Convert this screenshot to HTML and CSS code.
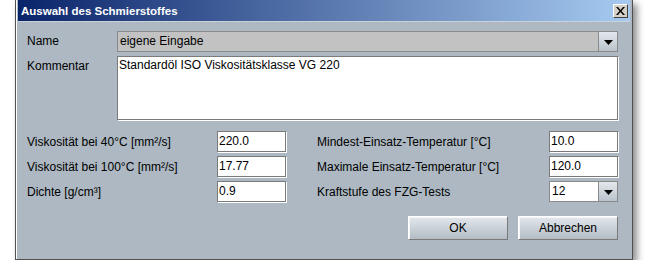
FILE: index.html
```html
<!DOCTYPE html>
<html lang="de">
<head>
<meta charset="utf-8">
<title>Auswahl des Schmierstoffes</title>
<link rel="stylesheet" href="styles.css">
</head>
<body>
<div class="window">
  <div class="titlebar">
    <span class="title">Auswahl des Schmierstoffes</span>
    <span class="close"><svg width="9" height="8" viewBox="0 0 9 8"><path d="M0 0h2l2.5 3 2.5-3h2L5.5 4 9 8H7L4.5 5 2 8H0l3.5-4z" fill="#000"/></svg></span>
  </div>
  <div class="content">
    <div class="top">
      <span class="label">Name</span>
      <div class="combo wide">
        <span class="combo-text">eigene Eingabe</span>
        <span class="arrow"><svg width="9" height="5" viewBox="0 0 9 5"><path d="M0 0h9L4.5 5z" fill="#000"/></svg></span>
      </div>
      <span class="label">Kommentar</span>
      <div class="textarea">Standardöl ISO Viskositätsklasse VG 220</div>
    </div>
    <div class="params">
      <div class="col">
        <div class="row"><span class="label">Viskosität bei 40°C [mm²/s]</span><span class="field">220.0</span></div>
        <div class="row"><span class="label">Viskosität bei 100°C [mm²/s]</span><span class="field">17.77</span></div>
        <div class="row"><span class="label">Dichte [g/cm³]</span><span class="field">0.9</span></div>
      </div>
      <div class="col">
        <div class="row"><span class="label">Mindest-Einsatz-Temperatur [°C]</span><span class="field">10.0</span></div>
        <div class="row"><span class="label">Maximale Einsatz-Temperatur [°C]</span><span class="field">120.0</span></div>
        <div class="row"><span class="label">Kraftstufe des FZG-Tests</span>
          <div class="combo small">
            <span class="combo-text">12</span>
            <span class="arrow"><svg width="9" height="5" viewBox="0 0 9 5"><path d="M0 0h9L4.5 5z" fill="#000"/></svg></span>
          </div>
        </div>
      </div>
    </div>
    <div class="buttons">
      <button class="btn">OK</button>
      <button class="btn">Abbrechen</button>
    </div>
  </div>
</div>
</body>
</html>
```
FILE: styles.css
```css
* { box-sizing: border-box; }
html, body { margin: 0; padding: 0; background: #ffffff; }
body {
  font-family: "Liberation Sans", Arial, sans-serif;
  font-size: 12px;
  color: #000;
}
.window {
  margin-left: 15px;
  width: 618px;
  height: 260px;
  background: #adb8c2;
  border: 1px solid #505050;
  border-top: none;
  box-shadow: inset 1px 0 0 #ffffff, 4px 4px 7px rgba(0,0,0,0.45);
  display: flex;
  flex-direction: column;
}
.titlebar {
  height: 22px;
  margin-left: 2px;
  margin-right: 2px;
  background: linear-gradient(to right, #0a246a, #a6caf0);
  display: flex;
  align-items: center;
  justify-content: space-between;
  padding: 0 2px 0 3px;
  border-bottom: 1px solid #c9d2da;
}
.title {
  color: #fff;
  font-weight: bold;
  font-size: 11.5px;
}
.close {
  width: 15px;
  height: 14px;
  background: #d4d0c8;
  border: 1px solid;
  border-color: #fff #404040 #404040 #fff;
  display: flex;
  align-items: center;
  justify-content: center;
}
.content {
  flex: 1;
  padding: 9px 14px 0 11px;
  display: flex;
  flex-direction: column;
}
.top {
  display: grid;
  grid-template-columns: 90px 1fr;
  row-gap: 4px;
  align-items: start;
}
.top .label { line-height: 21px; }
.combo {
  height: 21px;
  display: flex;
  border: 1px solid #8a8a8a;
  background: #c2c2c2;
}
.combo.small { background: #fff; width: 69px; }
.combo-text {
  flex: 1;
  padding-left: 2px;
  line-height: 19px;
}
.arrow {
  width: 19px;
  border-left: 1px solid #8a8a8a;
  background: linear-gradient(#e3e8ed, #b9c2cb);
  display: flex;
  align-items: center;
  justify-content: center;
  padding-top: 1px;
}
.textarea {
  height: 64px;
  background: #fff;
  border: 1px solid #7a7a7a;
  box-shadow: 1px 1px 0 #ffffff;
  padding: 1px 0 0 1px;
  line-height: 14px;
}
.params {
  margin-top: 11px;
  display: flex;
  gap: 31px;
}
.col {
  display: flex;
  flex-direction: column;
  gap: 4px;
}
.col:first-child { width: 259px; }
.col:last-child { flex: 1; }
.row {
  display: flex;
  justify-content: space-between;
  align-items: center;
  height: 21px;
}
.field {
  width: 69px;
  height: 21px;
  background: #fff;
  border: 1px solid #7a7a7a;
  box-shadow: 1px 1px 0 #ffffff;
  padding-left: 1px;
  line-height: 19px;
}
.buttons {
  margin-top: 14px;
  display: flex;
  justify-content: flex-end;
  gap: 10px;
}
.btn {
  width: 100px;
  height: 24px;
  font-family: "Liberation Sans", Arial, sans-serif;
  font-size: 12px;
  color: #000;
  background: linear-gradient(#e2e7ec, #b3bcc5);
  border: 1px solid;
  border-color: #ffffff #7a7a7a #7a7a7a #ffffff;
  box-shadow: inset 1px 1px 0 #f4f6f8;
  padding: 0;
}
```
